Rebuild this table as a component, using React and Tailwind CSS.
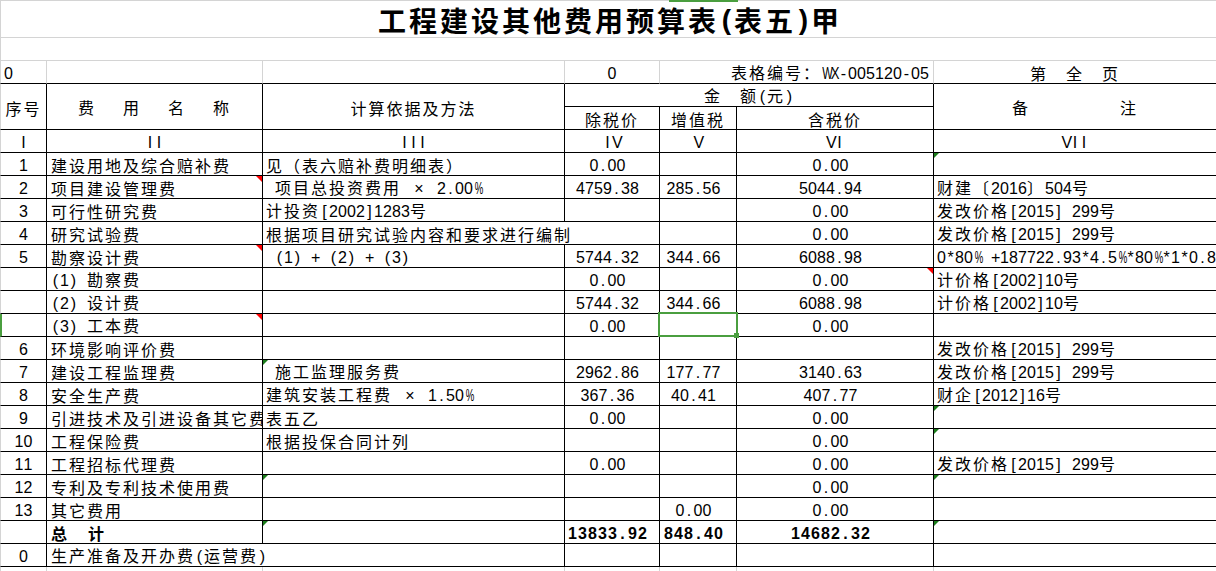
import React from "react";

function T({ s, b }) {
  const out = [];
  let buf = "";
  let k = 0;
  const flush = () => {
    if (buf) {
      out.push(
        <span key={"c" + k++} className={b ? "tracking-[2px] font-bold" : "tracking-[2px]"}>
          {buf}
        </span>
      );
      buf = "";
    }
  };
  for (const ch of [...s]) {
    const code = ch.codePointAt(0);
    if (code < 128) {
      flush();
      let cls = b
        ? "inline-block w-[10px] text-center font-bold font-['Liberation_Sans',sans-serif]"
        : "inline-block w-[9px] text-center font-['Liberation_Sans',sans-serif]";
      if (ch === "%") cls += " scale-x-[0.6]";
      if (ch === "W" || ch === "M") cls += " scale-x-[0.7]";
      if (ch === "X") cls += " scale-x-[0.82]";
      out.push(
        <span key={"a" + k++} className={cls}>
          {ch === " " ? "\u00a0" : ch}
        </span>
      );
    } else if (ch === "×") {
      flush();
      out.push(
        <span key={"x" + k++} className="inline-block w-[18px] text-center font-['Liberation_Sans',sans-serif]">
          ×
        </span>
      );
    } else {
      buf += ch;
    }
  }
  flush();
  return <span className="whitespace-nowrap leading-[22px]">{out}</span>;
}

const RedTri = () => (
  <span className="absolute top-0 right-0 w-0 h-0 border-l-[6px] border-l-transparent border-t-[6px] border-t-[#ff0000]" />
);
const GreenTri = () => (
  <span className="absolute top-0 left-0 w-0 h-0 border-r-[5px] border-r-transparent border-t-[5px] border-t-[#1b7d1b]" />
);

const base =
  "relative flex items-center overflow-hidden whitespace-nowrap border-r border-b border-black pt-[1px]";
const hdr =
  "relative flex items-center justify-center whitespace-nowrap border-r border-b border-black pt-[2px]";

const rows = [
  { a: "1", b: "建设用地及综合赔补费", c: "见（表六赔补费明细表）", d: "0.00", e: "", f: "0.00", g: "", gG: true },
  { a: "2", b: "项目建设管理费", bR: true, c: " 项目总投资费用 × 2.00%", d: "4759.38", e: "285.56", f: "5044.94", g: "财建〔2016〕504号" },
  { a: "3", b: "可行性研究费", c: "计投资[2002]1283号", d: "", e: "", f: "0.00", g: "发改价格[2015] 299号" },
  { a: "4", b: "研究试验费", c: "根据项目研究试验内容和要求进行编制", cd: true, e: "", f: "0.00", g: "发改价格[2015] 299号" },
  { a: "5", b: "勘察设计费", bR: true, c: " (1) + (2) + (3)", d: "5744.32", e: "344.66", f: "6088.98", g: "0*80% +187722.93*4.5%*80%*1*0.8" },
  { a: "", b: "(1) 勘察费", c: "", d: "0.00", e: "", f: "0.00", fR: true, g: "计价格[2002]10号" },
  { a: "", b: "(2) 设计费", c: "", d: "5744.32", e: "344.66", f: "6088.98", g: "计价格[2002]10号" },
  { a: "", b: "(3) 工本费", bR: true, sel: true, c: "", d: "0.00", e: "", f: "0.00", g: "" },
  { a: "6", b: "环境影响评价费", c: "", d: "", e: "", f: "", g: "发改价格[2015] 299号" },
  { a: "7", b: "建设工程监理费", c: " 施工监理服务费", cG: true, d: "2962.86", e: "177.77", f: "3140.63", g: "发改价格[2015] 299号" },
  { a: "8", b: "安全生产费", c: "建筑安装工程费 × 1.50%", d: "367.36", e: "40.41", f: "407.77", g: "财企[2012]16号" },
  { a: "9", b: "引进技术及引进设备其它费", c: "表五乙", d: "0.00", e: "", f: "0.00", g: "", gG: true },
  { a: "10", b: "工程保险费", c: "根据投保合同计列", d: "", e: "", f: "0.00", g: "", gG: true },
  { a: "11", b: "工程招标代理费", c: "", d: "0.00", e: "", f: "0.00", g: "发改价格[2015] 299号" },
  { a: "12", b: "专利及专利技术使用费", c: "", cG: true, d: "", e: "", f: "0.00", g: "", gG: true },
  { a: "13", b: "其它费用", c: "", d: "", e: "0.00", f: "0.00", g: "" },
  { a: "", total: true, c: "", cG: true, d: "13833.92", e: "848.40", f: "14682.32", g: "", gG: true, bold: true },
  { a: "0", b: "生产准备及开办费(运营费)", bc: true, d: "", e: "", f: "", g: "" },
];

function Row({ r }) {
  return (
    <>
      <div
        className={
          r.sel
            ? base + " justify-center border-l-2 border-l-[#4a9e3f]"
            : base + " justify-center border-l border-l-[#d4d4d4]"
        }
      >
        <T s={r.a} />
      </div>
      {r.total ? (
        <div className={base + " pl-[4px]"}>
          <span className="font-bold leading-[22px]">总</span>
          <span className="inline-block w-[21px]" />
          <span className="font-bold leading-[22px]">计</span>
        </div>
      ) : (
        <div className={r.bc ? base + " col-span-2 pl-[4px] overflow-visible" : base + " pl-[4px]"}>
          <T s={r.b} />
          {r.bR && <RedTri />}
        </div>
      )}
      {!r.bc && (
        <div className={r.cd ? base + " col-span-2 pl-[3px]" : base + " pl-[3px]"}>
          <T s={r.c} />
          {r.cG && <GreenTri />}
        </div>
      )}
      {!r.cd && (
        <div className={base + " justify-center pr-[9px]"}>
          <T s={r.d} b={r.bold} />
        </div>
      )}
      <div className={r.sel ? base + " justify-center pr-[9px] overflow-visible" : base + " justify-center pr-[9px]"}>
        <T s={r.e} b={r.bold} />
        {r.sel && (
          <div className="absolute -left-[2px] -top-[2px] w-[80px] h-[25px] border-2 border-[#4a9e3f] z-10">
            <div className="absolute -right-[3px] -bottom-[3px] w-[5px] h-[5px] bg-[#4a9e3f]" />
          </div>
        )}
      </div>
      <div className={base + " justify-center pr-[9px]"}>
        <T s={r.f} b={r.bold} />
        {r.fR && <RedTri />}
      </div>
      <div className={base + " pl-[3px] border-r-0"}>
        <T s={r.g} />
        {r.gG && <GreenTri />}
      </div>
    </>
  );
}

export default function App() {
  return (
    <div className="w-[1216px] h-[571px] overflow-hidden bg-white text-black text-[16px] font-['Noto_Sans_CJK_SC',sans-serif]">
      <div className="grid grid-cols-[47px_216px_302px_95px_77px_197px_282px] grid-rows-[38px_repeat(23,23px)_4px]">
        {/* title */}
        <div className="relative col-span-7 flex items-center justify-center border-t border-b border-l border-[#d4d4d4] pt-[2px]">
          <span className="absolute top-[-1px] left-[668px] w-[69px] h-[2px] bg-[#4a9e3f]" />
          <span className="flex whitespace-nowrap font-bold text-[28px] leading-[34px]">
            <span className="inline-block tracking-[3px]">工程建设其他费用预算表</span>
            <span className="inline-block w-[15px] text-center font-['Liberation_Sans',sans-serif]">(</span>
            <span className="inline-block tracking-[3px]">表五</span>
            <span className="inline-block w-[15px] text-center font-['Liberation_Sans',sans-serif]">)</span>
            <span className="inline-block">甲</span>
          </span>
        </div>
        {/* blank row */}
        <div className="col-span-7 border-b border-l border-[#d4d4d4]" />
        {/* info row */}
        <div className="flex items-center pt-[1px] pl-[3px] border-l border-r border-r-[#d4d4d4] border-l-[#d4d4d4] border-b border-b-black">
          <T s="0" />
        </div>
        <div className="border-r border-r-[#d4d4d4] border-b border-b-black" />
        <div className="border-r border-r-[#d4d4d4] border-b border-b-black" />
        <div className="flex items-center justify-center pt-[1px] border-r border-r-[#d4d4d4] border-b border-b-black">
          <T s="0" />
        </div>
        <div className="col-span-2 flex items-center justify-end pr-[4px] pt-[1px] border-r border-r-[#d4d4d4] border-b border-b-black">
          <T s="表格编号：WX-005120-05" />
        </div>
        <div className="flex items-center justify-center pt-[1px] border-b border-b-black">
          <T s="第　全　页" />
        </div>
        {/* header */}
        <div className={hdr + " row-span-2 border-l border-l-[#d4d4d4]"}>
          <T s="序号" />
        </div>
        <div className={hdr + " row-span-2"}>
          <T s="费   用   名   称" />
        </div>
        <div className={hdr + " row-span-2"}>
          <T s="计算依据及方法" />
        </div>
        <div className={hdr + " col-span-3"}>
          <T s="金　额(元)" />
        </div>
        <div className={hdr + " row-span-2 border-r-0"}>
          <T s="备          注" />
        </div>
        <div className={hdr}>
          <T s="除税价" />
        </div>
        <div className={hdr}>
          <T s="增值税" />
        </div>
        <div className={hdr}>
          <T s="含税价" />
        </div>
        {/* roman */}
        <div className={hdr + " border-l border-l-[#d4d4d4]"}>
          <T s="I" />
        </div>
        <div className={hdr}>
          <T s="II" />
        </div>
        <div className={hdr}>
          <T s="III" />
        </div>
        <div className={hdr}>
          <T s="IV" />
        </div>
        <div className={hdr}>
          <T s="V" />
        </div>
        <div className={hdr}>
          <T s="VI" />
        </div>
        <div className={hdr + " border-r-0"}>
          <T s="VII" />
        </div>
        {rows.map((r, i) => (
          <Row key={i} r={r} />
        ))}
        {/* filler gridlines */}
        <div className="border-l border-r border-[#d4d4d4]" />
        <div className="border-r border-[#d4d4d4]" />
        <div className="border-r border-[#d4d4d4]" />
        <div className="border-r border-[#d4d4d4]" />
        <div className="border-r border-[#d4d4d4]" />
        <div className="border-r border-[#d4d4d4]" />
        <div />
      </div>
    </div>
  );
}
